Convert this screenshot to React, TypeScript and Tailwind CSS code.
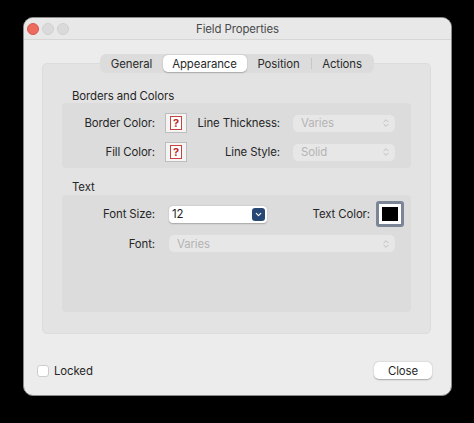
import { ChevronDown, ChevronsUpDown } from 'lucide-react'

function TrafficLights() {
  return (
    <div className="absolute left-[3px] top-[5px] flex gap-[3px]">
      <span className="h-[12px] w-[12px] rounded-full border border-[#d8564e] bg-[#ec6a5e]" />
      <span className="h-[12px] w-[12px] rounded-full border border-[#cfcfcf] bg-[#dadada]" />
      <span className="h-[12px] w-[12px] rounded-full border border-[#cfcfcf] bg-[#dadada]" />
    </div>
  )
}

function Tabs() {
  const tabs = [
    { label: 'General', w: 'w-[62px]' },
    { label: 'Appearance', w: 'w-[84px]', active: true },
    { label: 'Position', w: 'w-[64px]' },
    { label: 'Actions', w: 'w-[61px]' }
  ]

  return (
    <div className="relative z-10 mx-auto flex h-[19px] items-center rounded-[6px] bg-[#dcdcdc] px-px">
      {tabs.map((tab, i) => (
        <div key={tab.label} className="flex h-full items-center">
          {i === 3 && <span className="h-[11px] w-px bg-[#c6c6c6]" />}
          <div
            className={`flex h-[17px] ${tab.w} items-center justify-center rounded-[5px] text-[#2a2a2a] ${
              tab.active ? 'bg-white shadow-[0_0.5px_1.5px_rgba(0,0,0,0.25)]' : ''
            }`}
          >
            {tab.label}
          </div>
        </div>
      ))}
    </div>
  )
}

function Swatch() {
  return (
    <div className="flex h-[20px] w-[22px] items-center justify-center border border-[#bdbdbd] bg-[#f4f4f4]">
      <div className="flex h-[14px] w-[12px] items-center justify-center border border-[#c8413e] bg-white text-[11px] font-bold leading-none text-[#c02b2b]">
        ?
      </div>
    </div>
  )
}

function DisabledPopup({ value, className }: { value: string; className: string }) {
  return (
    <div className={`flex h-[17px] items-center justify-between rounded-[5px] bg-[#e7e7e7] pl-[8px] pr-[4px] text-[#b4b4b4] ${className}`}>
      <span>{value}</span>
      <ChevronsUpDown className="h-[10px] w-[10px] text-[#b8b8b8]" strokeWidth={2} />
    </div>
  )
}

function Label({ children, className = '' }: { children: string; className?: string }) {
  return <span className={`whitespace-nowrap text-right text-[#262626] ${className}`}>{children}</span>
}

export default function App() {
  return (
    <div className="h-[423px] w-[474px] bg-black pl-[23px] pt-[17px] font-['Inter',sans-serif] text-[11.4px] leading-[14px] tracking-[-0.1px]">
      <div className="flex h-[379px] w-[429px] flex-col overflow-hidden rounded-[10px] border border-[#8a8a8a] bg-[#ececec]">
        <div className="relative flex h-[22px] shrink-0 items-center justify-center border-b border-[#d6d6d6] bg-[#e8e8e8] px-2">
          <TrafficLights />
          <span className="text-[#4a4a4a]">Field Properties</span>
        </div>

        <div className="flex flex-col pl-[18px] pr-[20px] pt-[14px]">
          <Tabs />

          <div className="-mt-[10px] flex h-[271px] flex-col rounded-[5px] border border-[#dcdcdc] bg-[#e3e3e3] px-[19px] pt-[25px]">
            <div className="ml-[10px] text-[#262626]">Borders and Colors</div>
            <div className="flex h-[65px] flex-col gap-[9px] rounded-[4px] bg-[#dcdcdc] pl-[10px] pt-[10px]">
              <div className="flex items-center">
                <Label className="w-[83px]">Border Color:</Label>
                <div className="ml-[10px]">
                  <Swatch />
                </div>
                <Label className="ml-[10px] w-[83px]">Line Thickness:</Label>
                <DisabledPopup value="Varies" className="ml-[13px] w-[102px]" />
              </div>
              <div className="flex items-center">
                <Label className="w-[83px]">Fill Color:</Label>
                <div className="ml-[10px]">
                  <Swatch />
                </div>
                <Label className="ml-[10px] w-[83px]">Line Style:</Label>
                <DisabledPopup value="Solid" className="ml-[13px] w-[102px]" />
              </div>
            </div>

            <div className="ml-[10px] mt-[12px] text-[#262626]">Text</div>
            <div className="mt-[1px] flex h-[117px] flex-col gap-[8px] rounded-[4px] bg-[#dcdcdc] pl-[10px] pt-[6px]">
              <div className="flex items-center">
                <Label className="w-[83px]">Font Size:</Label>
                <div className="ml-[14px] flex h-[17px] w-[98px] items-center justify-between rounded-[4px] bg-white pl-[3px] pr-[2px] text-[#1e1e1e] shadow-[0_0.5px_1.5px_rgba(0,0,0,0.25)]">
                  <span>12</span>
                  <span className="flex h-[13px] w-[13px] items-center justify-center rounded-[3px] bg-[#274774]">
                    <ChevronDown className="h-[9px] w-[9px] text-white" strokeWidth={3} />
                  </span>
                </div>
                <Label className="ml-auto">Text Color:</Label>
                <div className="ml-[6px] mr-[7px] flex h-[26px] w-[28px] items-center justify-center rounded-[3px] bg-[#7c8595] p-[3px]">
                  <div className="flex h-full w-full items-center justify-center bg-white">
                    <div className="h-[14px] w-[16px] bg-black" />
                  </div>
                </div>
              </div>
              <div className="flex items-center">
                <Label className="w-[83px]">Font:</Label>
                <DisabledPopup value="Varies" className="ml-[14px] w-[226px]" />
              </div>
            </div>
          </div>
        </div>

        <div className="mt-auto flex items-center justify-between pb-[16px] pl-[13px] pr-[19px]">
          <div className="flex items-center gap-[5px]">
            <span className="h-[12px] w-[12px] rounded-[3px] border border-[#cdcdcd] bg-white" />
            <span className="text-[#262626]">Locked</span>
          </div>
          <button className="flex h-[17px] w-[58px] items-center justify-center rounded-[5px] bg-white text-[#262626] shadow-[0_0.5px_1.5px_rgba(0,0,0,0.3)]">
            Close
          </button>
        </div>
      </div>
    </div>
  )
}
